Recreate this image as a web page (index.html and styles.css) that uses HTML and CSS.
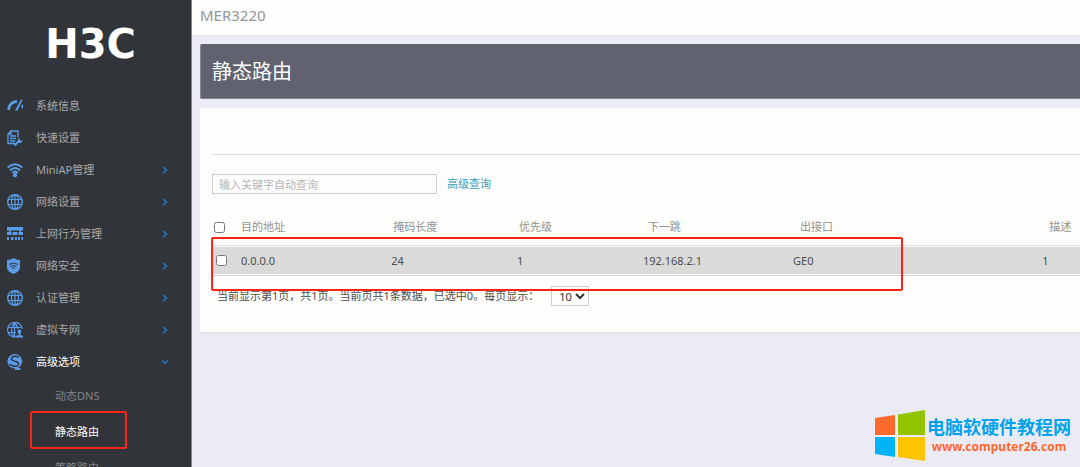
FILE: index.html
```html
<!DOCTYPE html>
<html lang="zh-CN">
<head>
<meta charset="utf-8">
<title>静态路由</title>
<link rel="stylesheet" href="styles.css">
</head>
<body>
<svg class="defs" aria-hidden="true">
  <symbol id="globe" viewBox="0 0 16 16"><g fill="none" stroke="currentColor" stroke-width="1.2"><circle cx="8" cy="8" r="7.3" stroke-width="1.4"/><ellipse cx="8" cy="8" rx="3.5" ry="7.3"/><path d="M8 1v14M1.5 5.500h13M1.5 10.500h13"/></g></symbol>
  <symbol id="right" viewBox="0 0 8 8"><path d="M2 1l3.5 3L2 7" fill="none" stroke="currentColor" stroke-width="1.4"/></symbol>
  <symbol id="down" viewBox="0 0 8 8"><path d="M1 2.5L4 5.5l3-3" fill="none" stroke="currentColor" stroke-width="1.4"/></symbol>
</svg>
<div class="layout">
  <nav class="sidebar">
    <div class="brand">H3C</div>
    <ul class="menu">
      <li><a href="#"><svg class="icon" viewBox="0 0 16 16"><path d="M1.500 12C2 7 5 3.800 10 3.400" fill="none" stroke="currentColor" stroke-width="2.600"/><path d="M8 12.500L14 1.500 15.500 2 10.500 12.500z" fill="currentColor"/><path d="M16 6q-3.500 2.500 0 5z" fill="currentColor"/></svg><span>系统信息</span></a></li>
      <li><a href="#"><svg class="icon" viewBox="0 0 16 16"><g fill="none" stroke="currentColor" stroke-width="1.300"><path d="M11 7.500V1H4L1 4v9.500h7M4 1v3H1"/><path d="M3 6h6M3 8.500h6M3 11h5"/></g><path d="M7.500 15.500l4-4" stroke="currentColor" stroke-width="2.200"/><path d="M11 12c-1-2 .5-4 2.500-3.500L12.500 10l1 1 2-1c.3 2-1.500 3.500-3.500 2.800z" fill="currentColor"/></svg><span>快速设置</span></a></li>
      <li><a href="#"><svg class="icon" viewBox="0 0 16 16"><g fill="none" stroke="currentColor" stroke-width="2"><path d="M.6 5.500q7.400-6.600 14.800 0M3 8.300q5-4.600 10 0M5.200 10.700q2.800-2.500 5.600 0"/></g><circle cx="8" cy="13" r="2.200" fill="currentColor"/></svg><span>MiniAP管理</span><svg class="arrow"><use href="#right"/></svg></a></li>
      <li><a href="#"><svg class="icon"><use href="#globe"/></svg><span>网络设置</span><svg class="arrow"><use href="#right"/></svg></a></li>
      <li><a href="#"><svg class="icon" viewBox="0 0 16 16"><path d="M0 1h16v3.500H0zM0 6h4.500v3H0zM5.500 6h5v3h-5zM11.500 6H16v3h-4.500zM2 4h1.500v2H2zM12.500 4H14v2h-1.500zM0 11h2v3H0zM4 11h2.500v3H4zM8 11h2v3H8zM11 11h2v3h-2zM14.500 11H16v3h-1.500z" fill="currentColor"/></svg><span>上网行为管理</span><svg class="arrow"><use href="#right"/></svg></a></li>
      <li><a href="#"><svg class="icon" viewBox="0 0 16 16"><path d="M6.500 0q3 2 6.500 2v7c0 4-4 6-6.500 7C4 15 0 13 0 9V2q3.500 0 6.500-2z" fill="currentColor"/><path d="M2 6.500q4.500-3 9 0M3.500 8.500q3-2 6 0M5 10.200q1.500-1 3 0" fill="none" stroke="#313539"/></svg><span>网络安全</span><svg class="arrow"><use href="#right"/></svg></a></li>
      <li><a href="#"><svg class="icon"><use href="#globe"/></svg><span>认证管理</span><svg class="arrow"><use href="#right"/></svg></a></li>
      <li><a href="#"><svg class="icon" viewBox="0 0 16 16"><g fill="none" stroke="currentColor" stroke-width="1.200"><path d="M9 14.900A7.300 7.300 0 1 1 15.200 7"/><path d="M7.500 15C3.500 11 3.500 5 7.500 1q3.500 3 3.500 6M7.500 1v14M1.300 5.500h13M1.300 10.500H9"/></g><circle cx="12.500" cy="9.500" r="1.900" fill="currentColor"/><path d="M11.500 10h2v3.500H16V15.500H9v-2h2.500z" fill="currentColor"/></svg><span>虚拟专网</span><svg class="arrow"><use href="#right"/></svg></a></li>
      <li><a href="#" class="open"><svg class="icon" viewBox="0 0 16 16"><circle cx="7.800" cy="7.300" r="7.300" fill="currentColor"/><path d="M8 13.500q3 0 6 1l-1 1.500H8z" fill="currentColor"/><path d="M12 3.500C9 1.500 5 2 4.500 4.500S7.500 7 10 8s2 4-1 4.300S4 11.500 2.500 10" fill="none" stroke="#313539" stroke-width="1.500"/></svg><span>高级选项</span><svg class="arrow"><use href="#down"/></svg></a>
        <ul class="submenu">
          <li><a href="#">动态DNS</a></li>
          <li><a href="#" class="current">静态路由</a></li>
          <li><a href="#">策略路由</a></li>
        </ul>
      </li>
    </ul>
  </nav>
  <div class="main">
    <header class="topbar">MER3220</header>
    <main class="content">
      <h1 class="title">静态路由</h1>
      <section class="panel">
        <div class="toolbar"></div>
        <div class="search">
          <input class="keyword" type="text" placeholder="输入关键字自动查询" aria-label="输入关键字自动查询">
          <a class="advanced" href="#">高级查询</a>
        </div>
        <div class="grid">
          <table class="routes">
            <colgroup><col class="c-check"><col class="c-dest"><col class="c-mask"><col class="c-prio"><col class="c-hop"><col class="c-out"><col></colgroup>
            <thead>
              <tr><th><input class="check" type="checkbox" aria-label="全选"></th><th>目的地址</th><th>掩码长度</th><th>优先级</th><th>下一跳</th><th>出接口</th><th>描述</th></tr>
            </thead>
            <tbody>
              <tr><td><input class="check" type="checkbox" aria-label="选择 0.0.0.0"></td><td>0.0.0.0</td><td>24</td><td>1</td><td>192.168.2.1</td><td>GE0</td><td>1</td></tr>
            </tbody>
          </table>
          <div class="marker"></div>
        </div>
        <div class="pager">
          <label for="size">当前显示第1页，共1页。当前页共1条数据，已选中0。每页显示：</label>
          <select id="size" class="size"><option>10</option></select>
        </div>
      </section>
    </main>
  </div>
</div>
<div class="watermark">
  <svg class="flag" viewBox="0 0 50 52"><path d="M0 8l20-3v20H0z" fill="#fb6a2c"/><path d="M23 4.500L50 0v25H23z" fill="#92c400"/><path d="M0 27h20v20L0 44z" fill="#00b3f4"/><path d="M23 27h27v24l-27-4z" fill="#ffc400"/></svg>
  <div class="site"><strong class="site-name">电脑软硬件教程网</strong><span class="site-url">www.computer26.com</span></div>
</div>
</body>
</html>
```

FILE: styles.css
```css
* { box-sizing: border-box; }
body {
  margin: 0;
  height: 100vh;
  overflow: hidden;
  background: #ebebf5;
  color: #4c4c4c;
  font: 11px/16px "Noto Sans", "Noto Sans CJK SC", sans-serif;
}
a { color: inherit; text-decoration: none; }
ul { list-style: none; margin: 0; padding: 0; }
.defs { position: absolute; width: 0; height: 0; }

.layout { display: flex; height: 100vh; }
.sidebar {
  flex: 0 0 192px;
  overflow: hidden;
  background: #313539;
  border-right: 1px solid #85888f;
  color: #a7a9ab;
}
.brand {
  height: 90px;
  padding: 21px 10px 0 0;
  border-bottom: 1px solid #2a2d31;
  color: #fff;
  font: bold 40px/46px "DejaVu Sans", sans-serif;
  text-align: center;
}
.menu > li > a {
  display: flex;
  align-items: center;
  height: 32px;
  padding: 0 22px 0 7px;
  border-bottom: 1px solid #2b2e32;
}
.menu span { flex: 1; }
.icon { width: 16px; height: 16px; margin-right: 13px; color: #5a9bea; }
.arrow { width: 8px; height: 8px; color: #1d7ccc; }
.menu .open { color: #fff; }
.submenu a {
  display: block;
  padding: 10px 0 9px 55px;
  border-bottom: 1px solid #2d3034;
  color: #818487;
}
.submenu .current { position: relative; color: #fff; }
.submenu .current::after {
  content: "";
  position: absolute;
  inset: -3px 64px 0 30px;
  border: 2px solid #fb2415;
  border-radius: 2px;
}

.main { flex: 1; min-width: 0; }
.topbar {
  height: 36px;
  padding: 5px 8px;
  border-bottom: 1px solid #e8e8ec;
  background: #fdfdfb;
  color: #92959a;
  font-size: 15px;
  line-height: 20px;
}
.content { padding: 8px 0 0 8px; }
.title {
  margin: 0 0 9px;
  padding: 14px 11px 12px;
  border: 1px solid #83869a;
  border-width: 0 0 1px 1px;
  border-radius: 2px 0 0 2px;
  background: #60636f;
  color: #fff;
  font-size: 20px;
  font-weight: 400;
  line-height: 28px;
}
.panel {
  padding: 0 0 26px 12px;
  border-bottom: 2px solid #e4e4e8;
  background: #fdfdfb;
}
.toolbar { height: 47px; border-bottom: 1px solid #e0e0df; }
.search { display: flex; align-items: center; gap: 10px; padding: 19px 0; }
.keyword {
  width: 225px;
  height: 20px;
  padding: 0 6px;
  border: 1px solid #ccc;
  background: #fdfdfb;
  font: inherit;
}
.keyword::placeholder { color: #b5b5b5; }
.advanced { color: #3a9dbd; }
.grid { position: relative; }
.routes { width: 100%; table-layout: fixed; border-collapse: separate; border-spacing: 0; }
.c-check { width: 29px; }
.c-dest, .c-hop { width: 17.3%; }
.c-mask, .c-prio { width: 14.5%; }
.c-out { width: 28.7%; }
.routes th, .routes td { padding: 0; font-weight: 400; text-align: left; white-space: nowrap; }
.routes th { height: 33px; border-bottom: 1px solid #dededd; color: #929292; padding-bottom: 4px; }
.routes th:nth-child(n+3) { padding-left: 2px; }
.routes th:nth-child(n+5) { padding-left: 5px; }
.routes th:nth-child(n+6) { padding-left: 7px; }
.routes td {
  height: 29px;
  border: 1px solid #fdfdfb;
  border-width: 1px 0;
  background: #dadad9;
  box-shadow: 0 1px #d5d5d4;
}
.check { display: block; width: 11px; height: 11px; margin: 0 0 0 2px; }
td .check { margin-left: 4px; }
.marker {
  position: absolute;
  top: 24px;
  left: -1px;
  width: 692px;
  height: 54px;
  border: 2px solid #fb2415;
  border-radius: 2px;
  pointer-events: none;
}
.pager { display: flex; align-items: center; gap: 12px; padding: 11px 0 0 5px; }
.size {
  height: 20px;
  width: 38px;
  padding: 0 0 0 3px;
  border: 1px solid #ccc;
  background: #fdfdfb;
  color: #333;
  font: inherit;
}

.watermark {
  position: absolute;
  right: 9px;
  bottom: 5px;
  display: flex;
  align-items: center;
  gap: 2px;
}
.flag { width: 50px; height: 52px; }
.site { display: flex; flex-direction: column; align-items: center; }
.site-name { color: #00a2ee; font-size: 18px; font-weight: 700; line-height: 22px; }
.site-url { color: #fb692d; font-size: 12px; font-weight: 700; line-height: 18px; }
```
